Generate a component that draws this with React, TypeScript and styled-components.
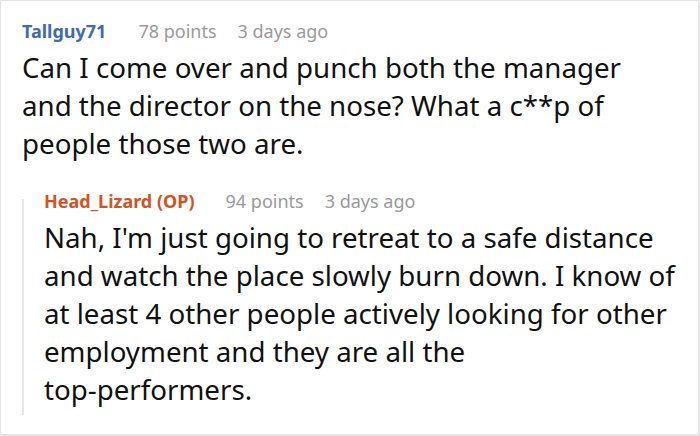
import styled, { createGlobalStyle } from "styled-components";

const GlobalStyle = createGlobalStyle`
  html, body {
    margin: 0;
    padding: 0;
    background: #ffffff;
  }
  body {
    font-family: "Noto Sans", "Open Sans", sans-serif;
  }
`;

const Frame = styled.div`
  box-sizing: border-box;
  width: 700px;
  height: 436px;
  overflow: hidden;
  background: #ffffff;
  border-top: 1px solid #e4e4e4;
  border-left: 1px solid #e4e4e4;
  border-right: 2px solid #e4e4e4;
  border-bottom: 2px solid #e4e4e4;
  padding: 16px 0 0 21px;
`;

const Comment = styled.div`
  display: flex;
  flex-direction: column;
`;

const Header = styled.div`
  display: flex;
  align-items: baseline;
  gap: 21px;
  height: 28px;
  line-height: 28px;
`;

const Author = styled.span<{ $op?: boolean }>`
  font-size: 18px;
  font-weight: 700;
  color: ${({ $op }) => ($op ? "#d4531f" : "#3d6bb7")};
  margin-right: ${({ $op }) => ($op ? "10px" : "11px")};
`;

const Meta = styled.span`
  font-size: 18px;
  color: #9a9a9a;
`;

const Body = styled.div`
  font-size: 27.7px;
  line-height: 38.2px;
  color: #111111;
  margin-top: 3px;
`;

const Line = styled.span`
  display: block;
  white-space: nowrap;
`;

const Reply = styled.div`
  position: relative;
  margin-top: 24px;
  padding-left: 22px;
  padding-top: 0;

  &::before {
    content: "";
    position: absolute;
    left: 0;
    top: 12px;
    bottom: -6px;
    width: 2px;
    background: #e8e8e8;
  }
`;

type Data = {
  author: string;
  op?: boolean;
  points: number;
  when: string;
  lines: string[];
};

const first: Data = {
  author: "Tallguy71",
  points: 78,
  when: "3 days ago",
  lines: [
    "Can I come over and punch both the manager",
    "and the director on the nose? What a c**p of",
    "people those two are.",
  ],
};

const second: Data = {
  author: "Head_Lizard (OP)",
  op: true,
  points: 94,
  when: "3 days ago",
  lines: [
    "Nah, I'm just going to retreat to a safe distance",
    "and watch the place slowly burn down. I know of",
    "at least 4 other people actively looking for other",
    "employment and they are all the",
    "top-performers.",
  ],
};

const CommentBlock = ({ c }: { c: Data }) => (
  <Comment>
    <Header>
      <Author $op={c.op}>{c.author}</Author>
      <Meta>{c.points} points</Meta>
      <Meta>{c.when}</Meta>
    </Header>
    <Body>
      {c.lines.map((l) => (
        <Line key={l}>{l}</Line>
      ))}
    </Body>
  </Comment>
);

export default function App() {
  return (
    <>
      <GlobalStyle />
      <Frame>
        <CommentBlock c={first} />
        <Reply>
          <CommentBlock c={second} />
        </Reply>
      </Frame>
    </>
  );
}
